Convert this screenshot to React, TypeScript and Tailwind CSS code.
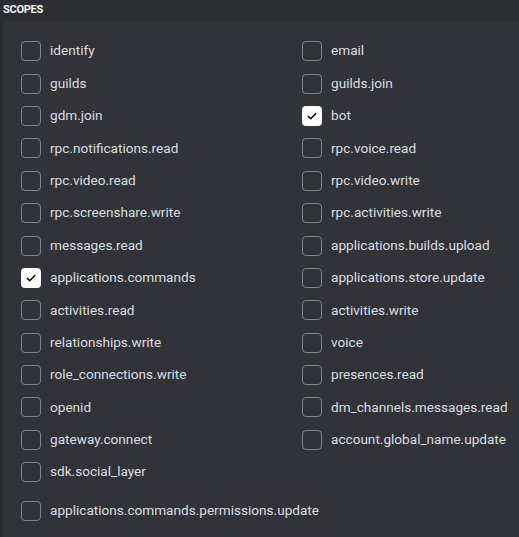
import React from 'react';

const scopes: [string, boolean][] = [
  ['identify', false],
  ['email', false],
  ['guilds', false],
  ['guilds.join', false],
  ['gdm.join', false],
  ['bot', true],
  ['rpc.notifications.read', false],
  ['rpc.voice.read', false],
  ['rpc.video.read', false],
  ['rpc.video.write', false],
  ['rpc.screenshare.write', false],
  ['rpc.activities.write', false],
  ['messages.read', false],
  ['applications.builds.upload', false],
  ['applications.commands', true],
  ['applications.store.update', false],
  ['activities.read', false],
  ['activities.write', false],
  ['relationships.write', false],
  ['voice', false],
  ['role_connections.write', false],
  ['presences.read', false],
  ['openid', false],
  ['dm_channels.messages.read', false],
  ['gateway.connect', false],
  ['account.global_name.update', false],
  ['sdk.social_layer', false],
];

const Checkbox: React.FC<{ checked: boolean }> = ({ checked }) => (
  <div
    className={`w-5 h-5 shrink-0 rounded-[4px] flex items-center justify-center ${
      checked ? 'bg-white' : 'border border-[#80848e]'
    }`}
  >
    {checked && (
      <svg width="12" height="12" viewBox="0 0 24 24" fill="none">
        <path d="M4.5 12.5l5 5L19.5 7" stroke="#060607" strokeWidth="3" strokeLinecap="round" strokeLinejoin="round" />
      </svg>
    )}
  </div>
);

const Scope: React.FC<{ name: string; checked: boolean }> = ({ name, checked }) => (
  <label className="flex items-center gap-[9px] h-[32.4px] cursor-pointer">
    <Checkbox checked={checked} />
    <span className="text-[13.6px] font-normal text-[#dbdee1] leading-none">{name}</span>
  </label>
);

export default function App() {
  return (
    <div
      className="w-[519px] h-[537px] overflow-hidden bg-[#2b2d31]"
      style={{ fontFamily: 'Roboto, "Noto Sans", sans-serif' }}
    >
      <div className="h-[22px] pl-[3px] pt-[2px] text-[11px] font-bold text-[#f2f3f5] tracking-tight">SCOPES</div>
      <div className="ml-[3px] w-[540px] h-[520px] rounded-tl-[4px] bg-[#313338] pl-[18px] pt-[13px]">
        <div className="grid grid-cols-[281px_281px]">
          {scopes.map(([name, checked]) => (
            <Scope key={name} name={name} checked={checked} />
          ))}
        </div>
        <div className="mt-[6.6px]">
          <Scope name="applications.commands.permissions.update" checked={false} />
        </div>
      </div>
    </div>
  );
}
